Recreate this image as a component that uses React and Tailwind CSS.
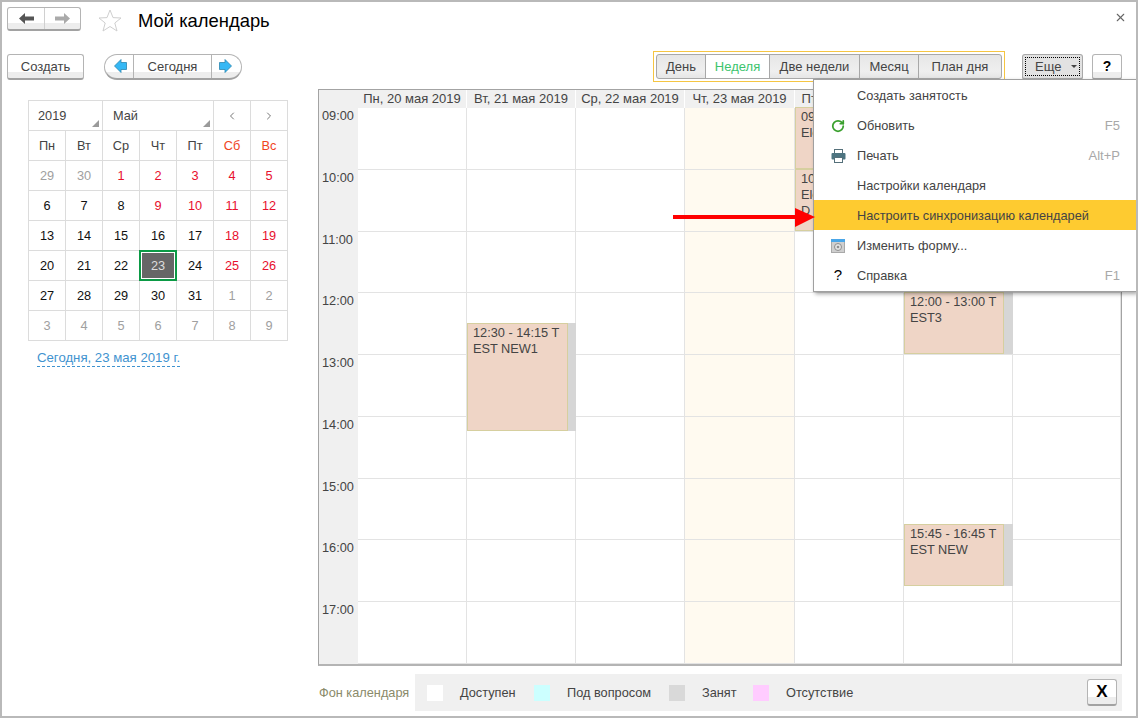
import React from 'react';
import { X, ChevronLeft, ChevronRight, RotateCw } from 'lucide-react';

const hours = [
  { time: '09:00', h: 'h-[62px]' },
  { time: '10:00', h: 'h-[62px]' },
  { time: '11:00', h: 'h-[61px]' },
  { time: '12:00', h: 'h-[62px]' },
  { time: '13:00', h: 'h-[62px]' },
  { time: '14:00', h: 'h-[62px]' },
  { time: '15:00', h: 'h-[61px]' },
  { time: '16:00', h: 'h-[62px]' },
  { time: '17:00', h: 'h-[62px]' },
];

const days = [
  { label: 'Пн, 20 мая 2019' },
  { label: 'Вт, 21 мая 2019' },
  { label: 'Ср, 22 мая 2019' },
  { label: 'Чт, 23 мая 2019', today: true },
  { label: 'Пт, 24 мая 2019' },
  { label: 'Сб, 25 мая 2019' },
  { label: 'Вс, 26 мая 2019' },
];

const grey = 'text-[#a0a0a0]';
const red = 'text-[#e8102e]';
const black = 'text-[#111]';

const monthDays = [
  ['29', grey], ['30', grey], ['1', red], ['2', red], ['3', red], ['4', red], ['5', red],
  ['6', black], ['7', black], ['8', black], ['9', red], ['10', red], ['11', red], ['12', red],
  ['13', black], ['14', black], ['15', black], ['16', black], ['17', black], ['18', red], ['19', red],
  ['20', black], ['21', black], ['22', black], ['23', 'selected'], ['24', black], ['25', red], ['26', red],
  ['27', black], ['28', black], ['29', black], ['30', black], ['31', black], ['1', grey], ['2', grey],
  ['3', grey], ['4', grey], ['5', grey], ['6', grey], ['7', grey], ['8', grey], ['9', grey],
];

const cell = 'border-r border-b border-[#dcdcdc] flex items-center justify-center';
const btn = 'bg-[linear-gradient(#fff_0,#fff_72%,#ededed_72%,#ededed_100%)] border border-[#b4b4b4] border-b-2 border-b-[#a2a2a2]';

const Corner = () => (
  <svg className="absolute right-[3px] bottom-[3px]" width="7" height="7" viewBox="0 0 7 7">
    <polygon points="7,0 7,7 0,7" fill="#9a9a9a" />
  </svg>
);

const BlueArrow = ({ flip }) => (
  <svg width="13" height="14" viewBox="0 0 13 14" className={flip ? 'scale-x-[-1]' : ''}>
    <polygon points="0.5,7 7,0.5 7,3.5 12.5,3.5 12.5,10.5 7,10.5 7,13.5" fill="#35b8f5" stroke="#2b86b0" strokeWidth="0.8" />
  </svg>
);

const GreyArrow = ({ color, flip }) => (
  <svg width="15" height="11" viewBox="0 0 15 11" className={flip ? 'scale-x-[-1]' : ''}>
    <polygon points="0,5.5 6,0 6,3.5 15,3.5 15,7.5 6,7.5 6,11" fill={color} />
  </svg>
);

const Printer = () => (
  <svg width="15" height="14" viewBox="0 0 15 14">
    <rect x="3.5" y="0.5" width="8" height="4" fill="#fff" stroke="#55707a" />
    <rect x="0.5" y="4" width="14" height="6.5" rx="1" fill="#4d7480" />
    <rect x="3.5" y="8.5" width="8" height="5" fill="#fff" stroke="#55707a" />
  </svg>
);

const FormIcon = () => (
  <svg width="14" height="14" viewBox="0 0 14 14">
    <rect x="0.5" y="0.5" width="13" height="13" fill="#cfcfcf" stroke="#a9a9a9" />
    <rect x="0" y="0" width="14" height="3" fill="#4aa6e8" />
    <circle cx="7" cy="8" r="3.5" fill="#e4e4e4" stroke="#8e8e8e" />
    <circle cx="7" cy="8" r="1.3" fill="#8e8e8e" />
  </svg>
);

const menuItems = [
  { label: 'Создать занятость' },
  { label: 'Обновить', key: 'F5', icon: <RotateCw size={14} strokeWidth={3} className="text-[#3aa02e]" /> },
  { label: 'Печать', key: 'Alt+P', icon: <Printer /> },
  { label: 'Настройки календаря' },
  { label: 'Настроить синхронизацию календарей', active: true },
  { label: 'Изменить форму...', icon: <FormIcon /> },
  { label: 'Справка', key: 'F1', icon: <span className="text-[15px] text-black">?</span> },
];

const Event = ({ pos, width, lines }) => (
  <div className={`absolute left-0 right-0 flex ${pos}`}>
    <div className={`${width} h-full shrink-0 bg-[#efd5c6] border border-[#d6cf9f] pl-[5px] pt-px leading-[16px] text-[#444] overflow-hidden whitespace-nowrap`}>
      {lines.map((l) => <div key={l}>{l}</div>)}
    </div>
    <div className="flex-1 bg-[#d6d6d6]" />
  </div>
);

const MiniCalendar = () => (
  <div className="w-[260px]">
    <div className="grid grid-cols-[repeat(7,37px)] auto-rows-[30px] border-l border-t border-[#dcdcdc] text-[#444]">
      <div className={`col-span-2 relative ${cell} !justify-start pl-[9px]`}>2019<Corner /></div>
      <div className={`col-span-3 relative ${cell} !justify-start pl-[10px]`}>Май<Corner /></div>
      <div className={cell}><ChevronLeft size={12} className="text-[#777]" /></div>
      <div className={cell}><ChevronRight size={12} className="text-[#777]" /></div>
      {['Пн', 'Вт', 'Ср', 'Чт', 'Пт'].map((d) => <div key={d} className={cell}>{d}</div>)}
      <div className={`${cell} text-[#f0451e]`}>Сб</div>
      <div className={`${cell} text-[#f0451e]`}>Вс</div>
      {monthDays.map(([d, c], i) =>
        c === 'selected' ? (
          <div key={i} className="border-2 border-[#0b9a45] -mt-px -ml-px bg-white p-px h-[31px] w-[38px]">
            <div className="w-full h-full bg-[#666] text-[#ddd] flex items-center justify-center">{d}</div>
          </div>
        ) : (
          <div key={i} className={`${cell} ${c}`}>{d}</div>
        )
      )}
    </div>
    <div className="mt-[9px] ml-[9px] inline-block text-[13.2px] text-[#3f93cf] border-b border-dashed border-[#3f93cf] leading-[16px]">
      Сегодня, 23 мая 2019 г.
    </div>
  </div>
);

const WeekGrid = () => (
  <div className="w-[804px] border border-[#a3a3a3] border-b-2 border-b-[#b4b4b4] grid grid-cols-[39px_109px_109px_109px_110px_109px_109px_108px] text-[#444]">
    <div className="flex flex-col bg-[#f0f0f0]">
      <div className="h-[18px]" />
      {hours.map((h) => (
        <div key={h.time} className={`${h.h} pl-[3px] leading-[16px]`}>{h.time}</div>
      ))}
    </div>
    {days.map((d, i) => (
      <div key={d.label} className={`relative flex flex-col ${d.today ? 'bg-[#fffaf0]' : ''}`}>
        <div className="h-[18px] bg-[#f0f0f0] border-r border-white text-center text-[13px] leading-[18px] whitespace-nowrap overflow-hidden">{d.label}</div>
        {hours.map((h) => (
          <div key={h.time} className={`${h.h} border-r border-b border-[#e3e3e3]`} />
        ))}
        {i === 1 && <Event pos="top-[233px] h-[108px]" width="w-[101px]" lines={['12:30 - 14:15 T', 'EST NEW1']} />}
        {i === 4 && <Event pos="top-[17px] h-[62px]" width="w-[100px]" lines={['09:00 - 10:00 T', 'Elena']} />}
        {i === 4 && <Event pos="top-[79px] h-[62px]" width="w-[100px]" lines={['10:00 - 11:00 T', 'Elena', 'D']} />}
        {i === 5 && <Event pos="top-[202px] h-[62px]" width="w-[100px]" lines={['12:00 - 13:00 T', 'EST3']} />}
        {i === 5 && <Event pos="top-[434px] h-[62px]" width="w-[100px]" lines={['15:45 - 16:45 T', 'EST NEW']} />}
      </div>
    ))}
  </div>
);

const legend = [
  { label: 'Доступен', color: 'bg-white', w: 'w-[107px]' },
  { label: 'Под вопросом', color: 'bg-[#ccffff]', w: 'w-[135px]' },
  { label: 'Занят', color: 'bg-[#d9d9d9]', w: 'w-[84px]' },
  { label: 'Отсутствие', color: 'bg-[#ffccff]', w: 'w-[110px]' },
];

export default function App() {
  return (
    <div className="relative w-[1138px] h-[718px] bg-white border-2 border-[#b9b9b9] font-['Liberation_Sans',Arial,sans-serif] text-[12.75px] text-[#444] overflow-hidden">
      {/* title row */}
      <div className="flex items-start pt-[5px] pl-[5px] h-[49px]">
        <div className={`flex w-[74px] h-[24px] rounded-[3px] ${btn}`}>
          <div className="w-[37px] flex items-center justify-center border-r border-[#d0d0d0]"><GreyArrow color="#555" /></div>
          <div className="flex-1 flex items-center justify-center"><GreyArrow color="#aaa" flip /></div>
        </div>
        <svg className="ml-[17px] mt-[2px]" width="24" height="23" viewBox="0 0 24 23">
          <polygon points="12,1 15,8.6 23,9 16.8,14 19,22 12,17.5 5,22 7.2,14 1,9 9,8.6" fill="none" stroke="#cfcfcf" />
        </svg>
        <div className="ml-[16px] text-[18.4px] leading-[28px] text-black">Мой календарь</div>
        <X size={13} className="ml-auto mr-[9px] mt-[4px] text-[#666]" />
      </div>

      {/* toolbar */}
      <div className="flex items-center h-[31px] pl-[5px] pr-[14px] text-[13px]">
        <div className={`w-[77px] h-[26px] pt-px flex items-center justify-center rounded-[3px] ${btn}`}>Создать</div>
        <div className={`ml-[20px] w-[138px] h-[26px] flex rounded-full ${btn}`}>
          <div className="w-[29px] flex items-center justify-center border-r border-[#b4b4b4] pl-[3px]"><BlueArrow /></div>
          <div className="flex-1 pt-px flex items-center justify-center border-r border-[#b4b4b4]">Сегодня</div>
          <div className="w-[29px] flex items-center justify-center pr-[3px]"><BlueArrow flip /></div>
        </div>
        <div className="ml-auto border border-[#f5c542] p-[2px] h-[31px] w-[352px]">
          <div className="flex h-[25px] w-[346px] border border-[#a8a8a8] rounded-[3px] bg-[linear-gradient(#e6e6e6_0,#efefef_70%,#e6e6e6_100%)]">
            <div className="w-[49px] pt-px flex items-center justify-center border-r border-[#a8a8a8]">День</div>
            <div className="w-[64px] pt-px flex items-center justify-center border-r border-[#a8a8a8] bg-white text-[#3cc46e]">Неделя</div>
            <div className="w-[90px] pt-px flex items-center justify-center border-r border-[#a8a8a8]">Две недели</div>
            <div className="w-[59px] pt-px flex items-center justify-center border-r border-[#a8a8a8]">Месяц</div>
            <div className="flex-1 pt-px flex items-center justify-center">План дня</div>
          </div>
        </div>
        <div className="ml-[17px] w-[61px] h-[26px] rounded-[3px] border border-[#a8a8a8] border-b-2 bg-[#e2e2e2] p-[2px]">
          <div className="h-full pt-px border border-dotted border-black flex items-center pl-[9px] gap-[10px]">
            Еще
            <svg width="6" height="3" viewBox="0 0 6 3"><polygon points="0,0 6,0 3,3" fill="#444" /></svg>
          </div>
        </div>
        <div className={`ml-[9px] w-[30px] h-[26px] pt-px rounded-[3px] flex items-center justify-center text-[14px] font-bold text-black ${btn}`}>?</div>
      </div>

      {/* main */}
      <div className="flex mt-[7px] pl-[26px] h-[576px]">
        <div className="pt-[11px]"><MiniCalendar /></div>
        <div className="ml-[30px]"><WeekGrid /></div>
      </div>

      {/* legend */}
      <div className="flex items-center mt-[9px] ml-[317px] h-[37px] w-[803px]">
        <div className="w-[96px] text-[#8a8a6a] pt-[1px] whitespace-nowrap">Фон календаря</div>
        <div className="flex-1 h-full bg-[#f0f0f0] flex items-center pl-[12px] pr-[5px]">
          {legend.map((l) => (
            <div key={l.label} className={`flex items-center ${l.w} shrink-0`}>
              <div className={`w-[16px] h-[16px] ${l.color}`} />
              <div className="ml-[17px] whitespace-nowrap">{l.label}</div>
            </div>
          ))}
          <div className={`ml-auto w-[30px] h-[27px] rounded-[3px] flex items-center justify-center text-[17px] font-bold text-black ${btn}`}>X</div>
        </div>
      </div>

      {/* dropdown */}
      <div className="absolute left-[811px] top-[77px] w-[323px] h-[213px] bg-white border border-[#a0a0a0] border-r-0 shadow-[2px_2px_4px_rgba(0,0,0,0.35)]">
        {menuItems.map((m) => (
          <div key={m.label} className={`relative h-[30px] pt-px flex items-center pl-[43px] pr-[16px] ${m.active ? 'bg-[#fecb30]' : ''}`}>
            {m.icon && <div className="absolute left-[16px] w-[16px] flex justify-center">{m.icon}</div>}
            <span>{m.label}</span>
            {m.key && <span className="ml-auto text-[13px] text-[#a8a8a8]">{m.key}</span>}
          </div>
        ))}
      </div>

      {/* red pointer */}
      <svg className="absolute left-[671px] top-[206px]" width="144" height="20" viewBox="0 0 144 20">
        <rect x="0" y="7" width="124" height="4" fill="#f00" />
        <polygon points="122,0 142,9 122,19" fill="#f00" />
      </svg>
    </div>
  );
}
